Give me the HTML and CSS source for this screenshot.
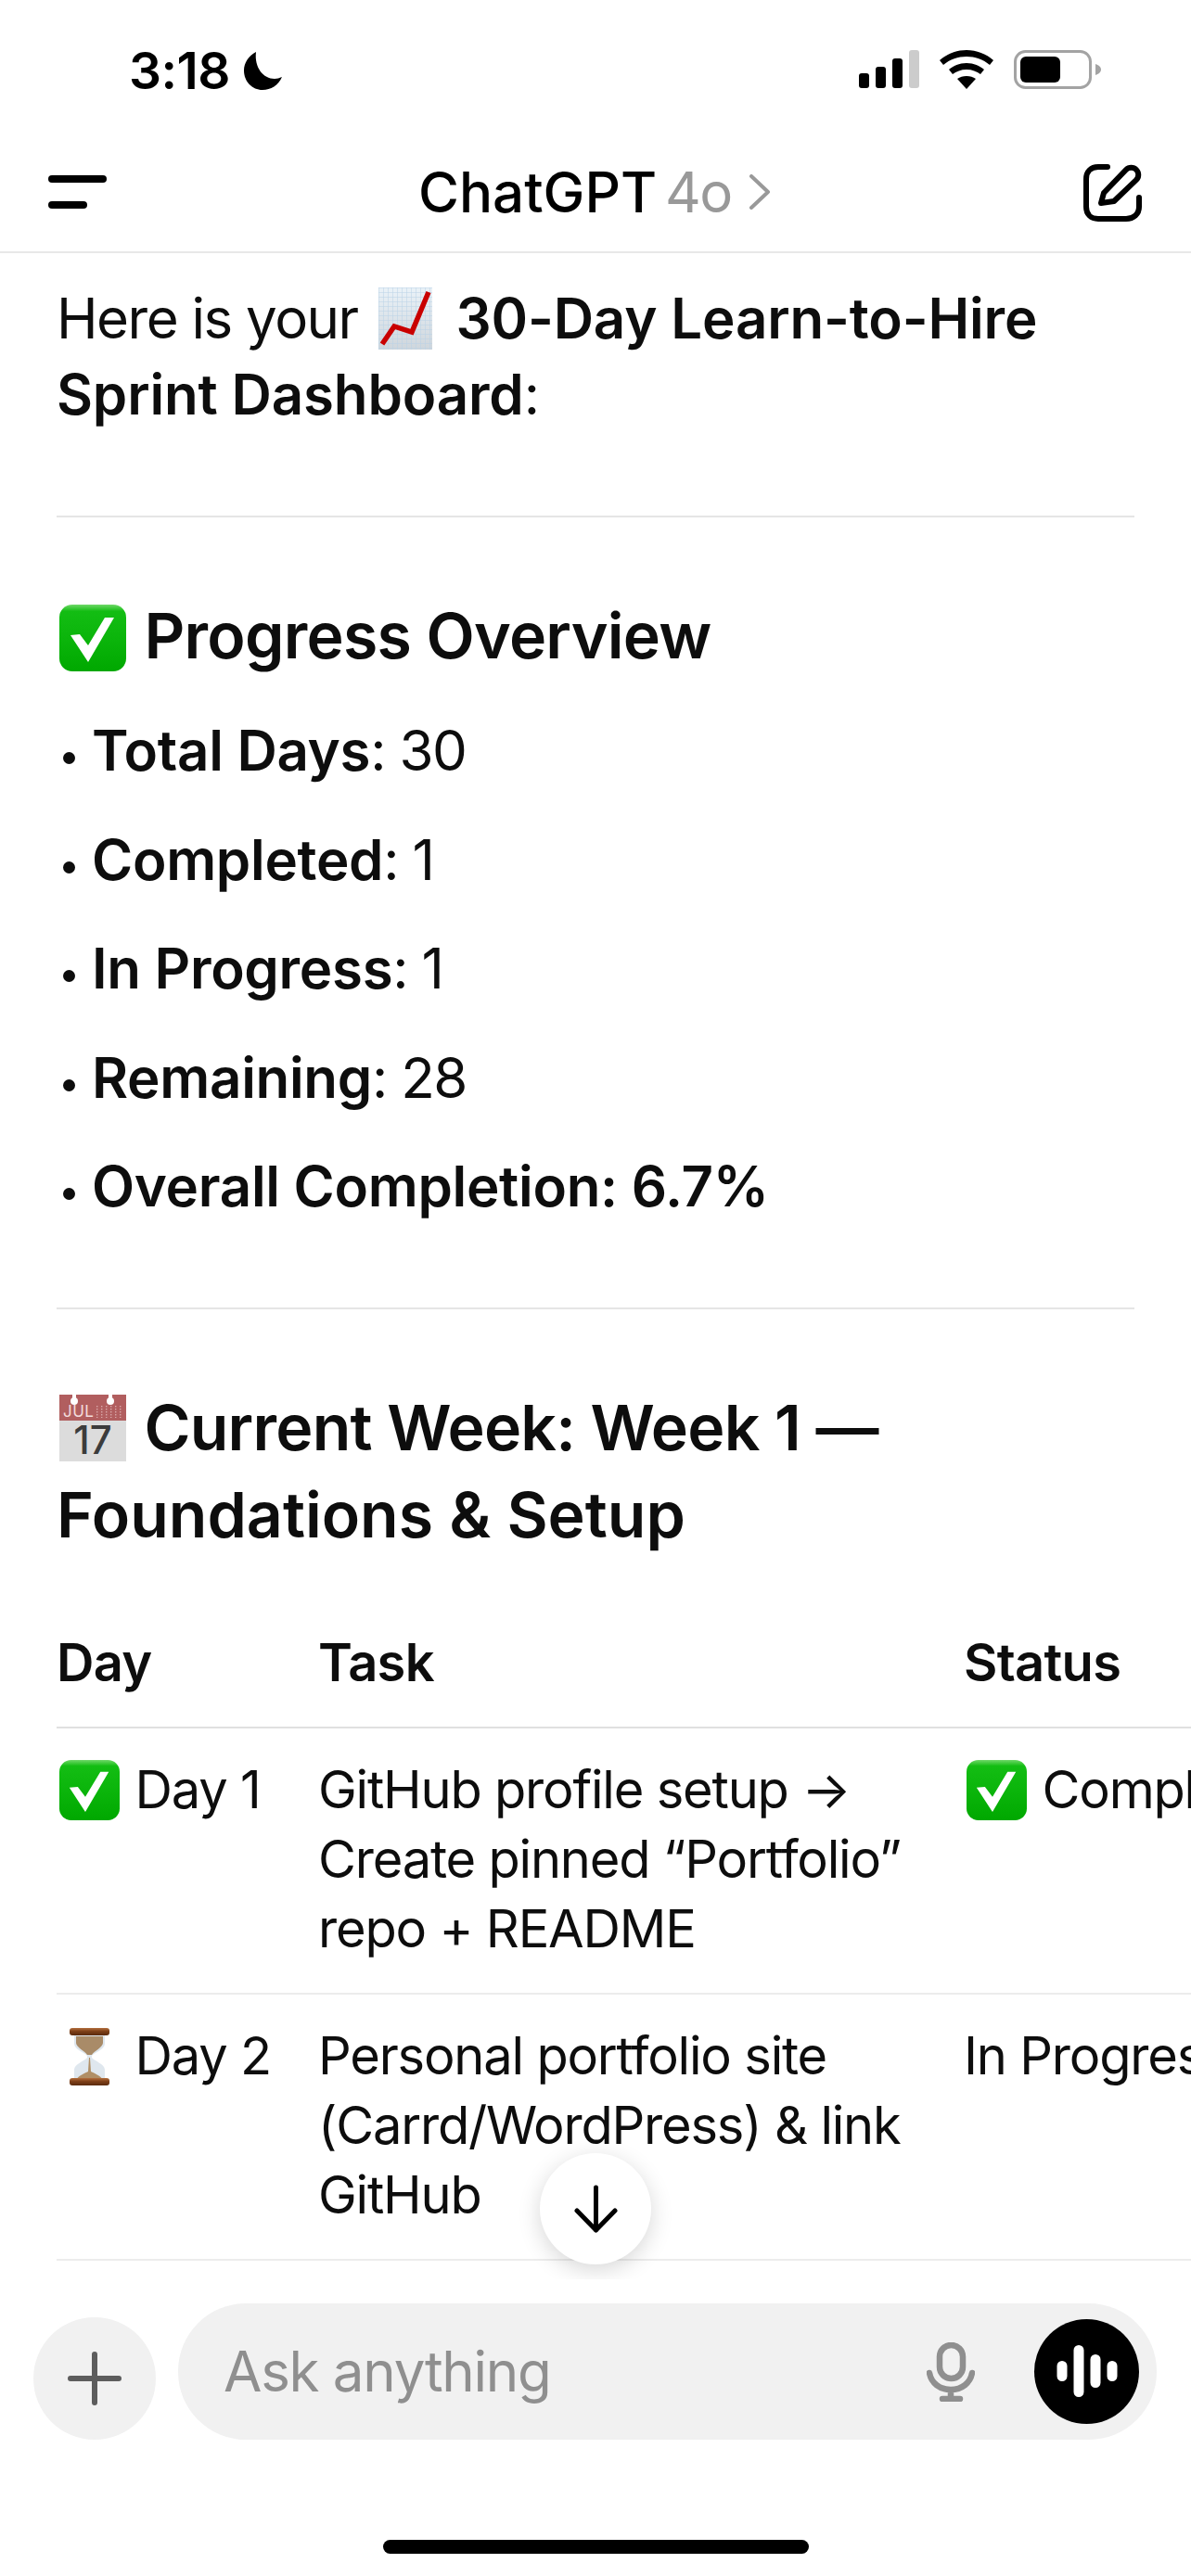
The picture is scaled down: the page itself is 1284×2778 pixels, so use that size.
FILE: index.html
```html
<!DOCTYPE html>
<html lang="en">
<head>
<meta charset="utf-8">
<title>ChatGPT</title>
<link rel="stylesheet" href="styles.css">
</head>
<body>
<svg class="defs" width="0" height="0" aria-hidden="true">
  <defs>
    <linearGradient id="chk" x1="0" y1="0" x2="0" y2="1">
      <stop offset="0" stop-color="#6fd868"/><stop offset=".1" stop-color="#13bd13"/><stop offset=".55" stop-color="#0ab40a"/><stop offset="1" stop-color="#00a800"/>
    </linearGradient>
    <symbol id="check" viewBox="0 0 72 72">
      <rect x="0" y="0" width="72" height="72" rx="14" fill="url(#chk)"/>
      <path d="M12 33l10-1 9 12 18-30h10L31 62z" fill="#fff"/>
    </symbol>
  </defs>
</svg>
<div class="phone">
  <div class="status">
    <div class="status-left">
      <span class="time">3:18</span>
      <svg class="moon" viewBox="0 0 41 41"><path d="M13 0C5 4 0 12 0 20c0 12 9 21 20 21 9 0 17-5 21-14-3 1-5 2-8 2C21 29 11 17 13 0z"/></svg>
    </div>
    <div class="status-right">
      <svg class="signal" viewBox="0 0 65 41"><rect x="0" y="25" width="11" height="16" rx="3"/><rect x="18" y="18" width="11" height="23" rx="3"/><rect x="36" y="9" width="11" height="32" rx="3"/><rect x="54" y="0" width="11" height="41" rx="3" fill="#ccc"/></svg>
      <svg class="wifi" viewBox="0 0 58 42"><path d="M29 0C18 0 8 4 0 11l4 5c7-6 16-9 25-9s18 3 25 9l4-5C50 4 40 0 29 0z"/><path d="M29 14c-8 0-14 3-19 7l4 5c4-3 9-5 15-5s11 2 15 5l4-5c-5-4-11-7-19-7z"/><path d="M29 28c-4 0-7 1-10 3l10 11 10-11c-3-2-6-3-10-3z"/></svg>
      <svg class="battery" viewBox="0 0 94 42"><rect x="1.5" y="1.5" width="81" height="39" rx="11" fill="none" stroke="#a3a3a3" stroke-width="3"/><rect x="7" y="7" width="43" height="28" rx="6"/><path d="M88 15c3 1 6 3 6 6s-3 5-6 6z" fill="#a3a3a3"/></svg>
    </div>
  </div>
  <header class="topbar">
    <svg class="menu" viewBox="0 0 63 36"><rect width="63" height="8" rx="4"/><rect y="28" width="42" height="8" rx="4"/></svg>
    <div class="title">
      <span class="title-main">ChatGPT</span>
      <span class="title-model">4o</span>
      <svg class="chev" viewBox="0 0 25 38"><path d="M3 2l18 17L3 36" fill="none" stroke="#999" stroke-width="4" stroke-linecap="round" stroke-linejoin="round"/></svg>
    </div>
    <svg class="compose" viewBox="0 0 63 62" fill="none" stroke="#000" stroke-width="6" stroke-linecap="round" stroke-linejoin="round"><path d="M26 3H16C8 3 3 8 3 16v30c0 8 5 13 13 13h30c8 0 14-5 14-13V36"/><path d="M19 42l3-11L46 6c3-3 8-3 11 0s3 8 0 11L33 40z"/></svg>
  </header>
  <main class="chat">
    <p class="intro">Here is your <svg class="emoji chart" viewBox="0 0 58 67"><defs><pattern id="grid" width="5" height="5" patternUnits="userSpaceOnUse"><path d="M5 0H0V5" fill="none" stroke="#b9d2e6" stroke-width="1"/></pattern><linearGradient id="paper" x1="0" y1="0" x2="0" y2="1"><stop offset="0" stop-color="#eaf2f8"/><stop offset="1" stop-color="#cfd6dc"/></linearGradient></defs><rect width="58" height="67" fill="url(#paper)"/><rect width="58" height="67" fill="url(#grid)"/><path d="M4 61l13-19 19 6L54 5" fill="none" stroke="#c90000" stroke-width="5.5"/></svg> <strong>30-Day Learn-to-Hire Sprint Dashboard</strong>:</p>
    <hr class="rule rule-a">
    <h2 class="heading heading-progress"><svg class="emoji h-check"><use href="#check"/></svg> Progress Overview</h2>
    <ul class="stats">
      <li><strong>Total Days</strong>: 30</li>
      <li><strong>Completed</strong>: 1</li>
      <li><strong>In Progress</strong>: 1</li>
      <li><strong>Remaining</strong>: 28</li>
      <li><strong>Overall Completion: 6.7%</strong></li>
    </ul>
    <hr class="rule rule-b">
    <h2 class="heading heading-week"><svg class="emoji cal" viewBox="0 0 72 72"><defs><pattern id="dots" width="5" height="3" patternUnits="userSpaceOnUse"><rect width="1.4" height="1.4" fill="#d9a9a9"/></pattern></defs><rect width="72" height="28" fill="#b15e5f"/><rect y="28" width="72" height="44" fill="#dcdcdc"/><rect x="40" y="12" width="28" height="13" fill="url(#dots)"/><path d="M14 0h4v6h-4zM53 0h4v6h-4z" fill="#fff"/><circle cx="16" cy="7" r="4" fill="#fff"/><circle cx="55" cy="7" r="4" fill="#fff"/><text x="4" y="24" class="cal-m">JUL</text><text x="36" y="64" class="cal-d">17</text></svg> Current Week: Week 1 — <span class="heading-tail">Foundations &amp; Setup</span></h2>
    <div class="table-wrap">
      <table class="plan">
        <colgroup><col class="c1"><col class="c2"><col class="c3"></colgroup>
        <thead><tr><th>Day</th><th>Task</th><th>Status</th></tr></thead>
        <tbody>
          <tr>
            <td><svg class="emoji t-check"><use href="#check"/></svg> Day 1</td>
            <td>GitHub profile setup → Create pinned “Portfolio” repo + README</td>
            <td class="nowrap"><svg class="emoji t-check"><use href="#check"/></svg> Completed</td>
          </tr>
          <tr>
            <td><svg class="emoji t-glass" viewBox="0 0 43 64"><defs><linearGradient id="wood" x1="0" y1="0" x2="0" y2="1"><stop offset="0" stop-color="#b4703f"/><stop offset=".45" stop-color="#7d3f18"/><stop offset="1" stop-color="#5a2a0e"/></linearGradient></defs><path d="M5 8h33v10c0 6-12 10-14 13v2c2 3 14 7 14 13v10H5V46c0-6 12-10 14-13v-2c-2-3-14-7-14-13z" fill="#dfe7ee"/><path d="M7 10h29v7c0 5-10 9-12 13h-5c-2-4-12-8-12-13z" fill="#a98b68"/><path d="M21 33h1l1 15c4 2 10 4 13 9H7c3-5 9-7 13-9z" fill="#b08f66"/><rect x="0" y="1" width="43" height="8" rx="3" fill="url(#wood)"/><rect x="0" y="55" width="43" height="8" rx="3" fill="url(#wood)"/></svg> Day 2</td>
            <td>Personal portfolio site (Carrd/WordPress) &amp; link GitHub</td>
            <td class="nowrap">In Progress</td>
          </tr>
        </tbody>
      </table>
    </div>
    <button class="to-bottom" type="button" aria-label="Scroll to bottom"><svg viewBox="0 0 47 52" fill="none" stroke="#000" stroke-width="5" stroke-linecap="round" stroke-linejoin="round"><path d="M23.5 3v46M3 28l20.500 21L44 28"/></svg></button>
  </main>
  <footer class="composer">
    <div class="composer-row">
      <div class="plus"><svg viewBox="0 0 58 58" fill="none" stroke="#5d5d5d" stroke-width="6" stroke-linecap="round"><path d="M29 3v52M3 29h52"/></svg></div>
      <div class="input">
        <span class="placeholder">Ask anything</span>
        <svg class="mic" viewBox="0 0 52 64" fill="none" stroke="#8f8f8f" stroke-width="6.500" stroke-linecap="round"><rect x="14" y="3" width="25" height="36" rx="12.500"/><path d="M3 33c2 11 11 18 23 18s21-7 23-18M26 51v9M17 61h19"/></svg>
        <div class="voice"><svg viewBox="0 0 113 113" fill="none" stroke="#fff" stroke-linecap="round" stroke-width="11"><path d="M30 50.500v11M48 33.500v45M66 43.500v25M84 50.500v11"/></svg></div>
      </div>
    </div>
    <div class="home"></div>
  </footer>
</div>
</body>
</html>
```

FILE: styles.css
```css
* { box-sizing: border-box; }
html, body { margin: 0; padding: 0; background: #fff; }
body { width: 1284px; height: 2778px; overflow: hidden; font-family: Inter, "Liberation Sans", sans-serif; color: #0d0d0d; }
.defs { position: absolute; }
.phone { width: 1284px; height: 2778px; display: flex; flex-direction: column; overflow: hidden; }

.status { height: 152px; flex: none; display: flex; justify-content: space-between; align-items: flex-start; padding: 54px 97px 0 139px; }
.status-left { display: flex; align-items: center; gap: 15px; height: 44px; }
.time { font-size: 55px; font-weight: 600; letter-spacing: -.5px; color: #000; line-height: 44px; }
.moon { width: 41px; height: 41px; fill: #000; }
.status-right { display: flex; align-items: flex-start; gap: 22px; }
.signal { width: 65px; height: 41px; fill: #000; }
.wifi { width: 58px; height: 42px; fill: #000; }
.battery { width: 94px; height: 42px; fill: #000; }

.topbar { height: 121px; flex: none; border-bottom: 2px solid #e8e8e8; display: flex; align-items: flex-start; justify-content: space-between; padding: 0 53px 0 52px; position: relative; }
.menu { width: 63px; height: 36px; margin-top: 37px; fill: #000; }
.title { position: absolute; left: 451px; top: 22px; display: flex; align-items: center; height: 66px; white-space: nowrap; }
.title-main { font-size: 60px; font-weight: 500; color: #000; }
.title-model { font-size: 60px; font-weight: 400; color: #999; margin-left: 9px; letter-spacing: -1.5px; }
.chev { width: 25px; height: 38px; margin-left: 18px; }
.compose { width: 63px; height: 62px; margin-top: 25px; }

.chat { flex: 1; min-height: 0; position: relative; padding: 29px 0 0 61px; overflow: hidden; }
.intro { margin: 0; width: 1162px; font-size: 60px; line-height: 82px; letter-spacing: -1.5px; }
.intro strong { font-weight: 600; letter-spacing: -.15px; }
.stats strong { font-weight: 600; letter-spacing: -.3px; }
.emoji { display: inline-block; vertical-align: middle; }
.chart { width: 58px; height: 67px; margin: 0 10px 0 7px; position: relative; top: -5px; }

.rule { border: 0; height: 2px; background: #e5e5e5; width: 1162px; margin: 0; }
.rule-a { margin-top: 90px; }
.rule-b { margin-top: 90px; }

.heading { margin: 0; font-size: 68px; line-height: 94px; font-weight: 600; letter-spacing: -.75px; width: 1162px; }
.heading-tail { letter-spacing: 0; }
.heading-progress { margin-top: 80px; }
.heading-week { margin-top: 80px; }
.h-check { width: 72px; height: 72px; margin: 0 3px 0 3px; position: relative; top: -3px; }
.cal { width: 72px; height: 72px; margin: 0 3px 0 3px; position: relative; top: -5px; }
.cal-m { font: 400 17px Inter, sans-serif; letter-spacing: .5px; fill: #f3dcdc; }
.cal-d { font: 500 42px Inter, sans-serif; letter-spacing: 0; fill: #3c3c3c; text-anchor: middle; }

.stats { list-style: none; margin: 36px 0 0; padding: 0; }
.stats li { font-size: 60px; line-height: 82px; margin-bottom: 35.5px; letter-spacing: -1.5px; padding-left: 38px; position: relative; }
.stats li:last-child { margin-bottom: 0; }
.stats li::before { content: ""; position: absolute; left: 7px; top: 43px; width: 13px; height: 13px; border-radius: 50%; background: #0d0d0d; }

.table-wrap { margin-top: 76px; overflow: hidden; }
.plan { border-collapse: collapse; table-layout: fixed; width: 1378px; }
.c1 { width: 282px; }
.c2 { width: 696px; }
.c3 { width: 400px; }
.plan th { text-align: left; font-size: 56px; font-weight: 600; line-height: 75px; padding: 0 0 31px; border-bottom: 2px solid #e0e0e0; letter-spacing: -.7px; }
.plan td { font-size: 56px; line-height: 75px; padding: 29px 30px 31px 0; border-bottom: 2px solid #ececec; vertical-align: top; letter-spacing: -1.2px; }
.nowrap { white-space: nowrap; }
.t-check { width: 65px; height: 65px; margin: 0 2px 0 3px; position: relative; top: -4px; }
.t-glass { width: 43px; height: 64px; margin: 0 13px 0 14px; position: relative; top: -4px; }

.to-bottom { position: absolute; left: 582px; top: 2049px; width: 120px; height: 120px; border-radius: 50%; background: #fff; border: 0; padding: 0; box-shadow: 0 6px 24px rgba(0,0,0,.16); display: flex; align-items: center; justify-content: center; }
.to-bottom svg { width: 47px; height: 52px; }

.composer { flex: none; height: 320px; padding: 26px 37px 0 36px; display: flex; flex-direction: column; background: #fff; }
.composer-row { display: flex; align-items: flex-end; gap: 24px; height: 147px; }
.plus { width: 132px; height: 132px; border-radius: 50%; background: #f1f1f1; display: flex; align-items: center; justify-content: center; flex: none; }
.plus svg { width: 58px; height: 58px; }
.input { flex: 1; height: 147px; border-radius: 73px; background: #f1f1f1; display: flex; align-items: center; padding: 0 19px 0 49px; }
.placeholder { flex: 1; font-size: 60px; color: #8f8f8f; letter-spacing: -1.25px; position: relative; top: -1px; }
.mic { width: 52px; height: 64px; margin-right: 64px; }
.voice { width: 113px; height: 113px; border-radius: 50%; background: #000; flex: none; }
.voice svg { display: block; width: 113px; height: 113px; }

.home { width: 459px; height: 15px; border-radius: 8px; background: #000; margin: 108px 0 0 377px; }
```
